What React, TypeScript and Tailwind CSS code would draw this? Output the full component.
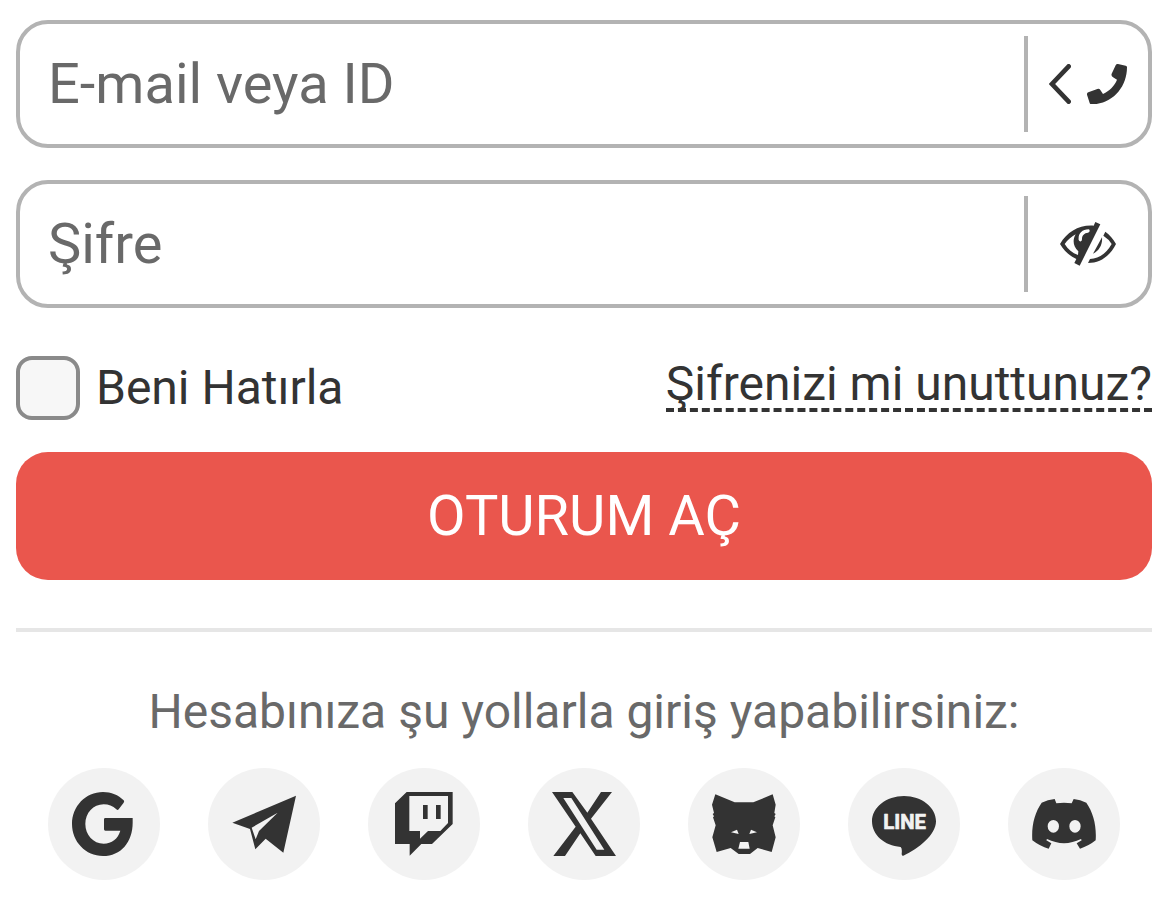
import React, { useState } from 'react';

interface FieldProps {
  label: string;
  type: string;
  action: string;
  onAction?: () => void;
  children: React.ReactNode;
}

const Field: React.FC<FieldProps> = ({ label, type, action, onAction, children }) => (
  <div className="flex h-32 items-center rounded-[32px] border-4 border-[#b3b3b3] bg-white">
    <input
      type={type}
      aria-label={label}
      placeholder={label}
      className="h-full min-w-0 flex-1 rounded-l-[28px] bg-transparent pl-7 text-[56px] text-[#333] outline-none placeholder:text-[#696969]"
    />
    <button
      type="button"
      aria-label={action}
      onClick={onAction}
      className="flex h-24 w-[124px] shrink-0 items-center justify-center gap-4 border-l-4 border-[#b3b3b3] text-[#333]"
    >
      {children}
    </button>
  </div>
);

const ChevronIcon = () => (
  <svg className="h-10 w-[22px]" viewBox="0 0 66 120" fill="none" stroke="currentColor" strokeWidth={14}>
    <path d="M59 7 9 60l50 53" strokeLinecap="round" />
  </svg>
);

const PhoneIcon = () => (
  <svg className="size-10" viewBox="0 0 120 120" fill="currentColor">
    <path d="M0 92Q-1 87 4 85L31 75Q37 73 40 78L48 90C68 80 83 65 90 47L77 39Q72 35 74 29L86 4Q88-1 93 0L116 5Q120 6 120 10C120 71 75 121 14 121Q9 121 8 117Z" />
  </svg>
);

const EyeOffIcon = () => (
  <svg className="h-11 w-14" viewBox="0 0 168 132" fill="currentColor">
    <path
      fillRule="evenodd"
      d="M106 0 121 7 59 131 43 123 49 111C29 102 12 87 0 66C22 29 57 8 101 11ZM47 37C34 44 23 54 14 66C24 82 37 93 54 99L55 88C39 74 37 53 47 37ZM86 22C65 22 54 36 56 54Q58 59 63 58Q66 57 66 51C66 40 73 33 84 32Q89 30 89 26Q89 23 86 22Z"
    />
    <path d="M136 29C149 38 160 51 168 66C150 102 121 123 84 123L90 111C118 110 140 93 155 66Q146 51 130 41ZM126 46C128 66 119 85 99 95Z" />
  </svg>
);

const GoogleIcon = () => (
  <path d="M155 32 140 52Q137 56 133 52C122 42 110 37 95 37C64 37 40 63 40 96C40 129 64 155 95 155C119 155 138 140 145 116H100Q96 116 96 112V82Q96 78 100 78H182V92C182 150 147 192 93 192C41 192 0 149 0 96C0 43 41 0 93 0C118 0 139 9 155 25Q158 28 155 32Z" />
);

const TelegramIcon = () => (
  <path fillRule="evenodd" d="M1 92 192 11 154 182 101 140 70 172 54 111ZM137 62 59 107 71 142 81 117Z" />
);

const TwitchIcon = () => (
  <path
    fillRule="evenodd"
    d="M35 0H173V96L111 156H79L44 191V156H0V34ZM43 12V117H75V140L99 117H136L159 93V12ZM84 39H98V81H84ZM123 39H137V81H123Z"
    transform="translate(9 0)"
  />
);

const XIcon = () => (
  <path
    fillRule="evenodd"
    d="M0 0H61L106 62 147 0H180L117 80 192 192H131L85 124 39 192H4L71 104ZM34 18 134 173H157L58 18Z"
  />
);

const FoxIcon = () => (
  <path
    fillRule="evenodd"
    d="M10 7 68 31H124L182 7 191 38 187 63 191 66 187 73 190 76 182 100 191 136 179 180 137 168 114 186H80L56 168 14 180 1 136 11 100 3 76 6 73 2 66 6 63 0 38ZM57 121 80 126 75 113ZM135 121 112 126 117 113ZM84 150 79 170H113L109 150Z"
  />
);

const LineIcon = () => (
  <>
    <path d="M96 12C149 12 192 46 192 88C192 128 140 170 94 191Q89 193 89 186Q91 169 86 165C37 162 0 128 0 88C0 46 43 12 96 12Z" />
    <text
      x="98"
      y="112"
      textAnchor="middle"
      fontSize="61"
      fontWeight="700"
      strokeWidth="2"
      strokeLinejoin="round"
      className="fill-[#f2f2f2] stroke-[#f2f2f2] font-['Roboto',sans-serif]"
    >
      LINE
    </text>
  </>
);

const DiscordIcon = () => (
  <path
    fillRule="evenodd"
    d="M68 21 73 34Q96 31 119 34L125 21Q145 23 163 32C184 62 194 101 191 145Q170 162 144 170L134 154 149 145 147 141Q96 166 45 141L43 145 58 154 50 170Q24 163 1 145C-2 101 8 62 29 32Q47 23 68 21ZM64 84A17 19 0 1 0 64 122A17 19 0 1 0 64 84ZM129 84A17 19 0 1 0 129 122A17 19 0 1 0 129 84Z"
  />
);

const socials = [
  { name: 'Google', Icon: GoogleIcon },
  { name: 'Telegram', Icon: TelegramIcon },
  { name: 'Twitch', Icon: TwitchIcon },
  { name: 'X', Icon: XIcon },
  { name: 'MetaMask', Icon: FoxIcon },
  { name: 'LINE', Icon: LineIcon },
  { name: 'Discord', Icon: DiscordIcon },
];

const App: React.FC = () => {
  const [showPassword, setShowPassword] = useState(false);

  return (
    <main className="bg-white pt-5 pr-[18px] pb-6 pl-4 font-['Roboto',sans-serif] text-[#333]">
      <form onSubmit={(e) => e.preventDefault()}>
        <div className="flex flex-col gap-8">
          <Field label="E-mail veya ID" type="text" action="Telefon ile giriş">
            <ChevronIcon />
            <PhoneIcon />
          </Field>
          <Field
            label="Şifre"
            type={showPassword ? 'text' : 'password'}
            action="Şifreyi göster"
            onAction={() => setShowPassword(!showPassword)}
          >
            <EyeOffIcon />
          </Field>
        </div>

        <div className="mt-12 flex items-end justify-between">
          <label className="flex items-center gap-4 text-5xl leading-[64px]">
            <input
              type="checkbox"
              className="size-16 appearance-none rounded-2xl border-4 border-[#8a8a8a] bg-[#f7f7f7] checked:bg-[#eb564d]"
            />
            Beni Hatırla
          </label>
          <a href="#" className="mb-2 border-b-4 border-dashed border-[#333] text-5xl leading-[48px]">
            Şifrenizi mi unuttunuz?
          </a>
        </div>

        <button type="submit" className="mt-8 h-32 w-full rounded-[32px] bg-[#ea564d] text-[56px] text-white">
          OTURUM AÇ
        </button>
      </form>

      <hr className="mt-12 border-t-4 border-[#e6e6e6]" />

      {/* Social sign-in */}
      <p className="mt-[52px] text-center text-5xl leading-[56px] text-[#696969]">
        Hesabınıza şu yollarla giriş yapabilirsiniz:
      </p>
      <div className="mt-7 flex justify-between px-8">
        {socials.map(({ name, Icon }) => (
          <button
            key={name}
            type="button"
            aria-label={name}
            className="flex size-28 items-center justify-center rounded-full bg-[#f2f2f2]"
          >
            <svg className="size-16" viewBox="0 0 192 192" fill="currentColor">
              <Icon />
            </svg>
          </button>
        ))}
      </div>
    </main>
  );
};

export default App;
